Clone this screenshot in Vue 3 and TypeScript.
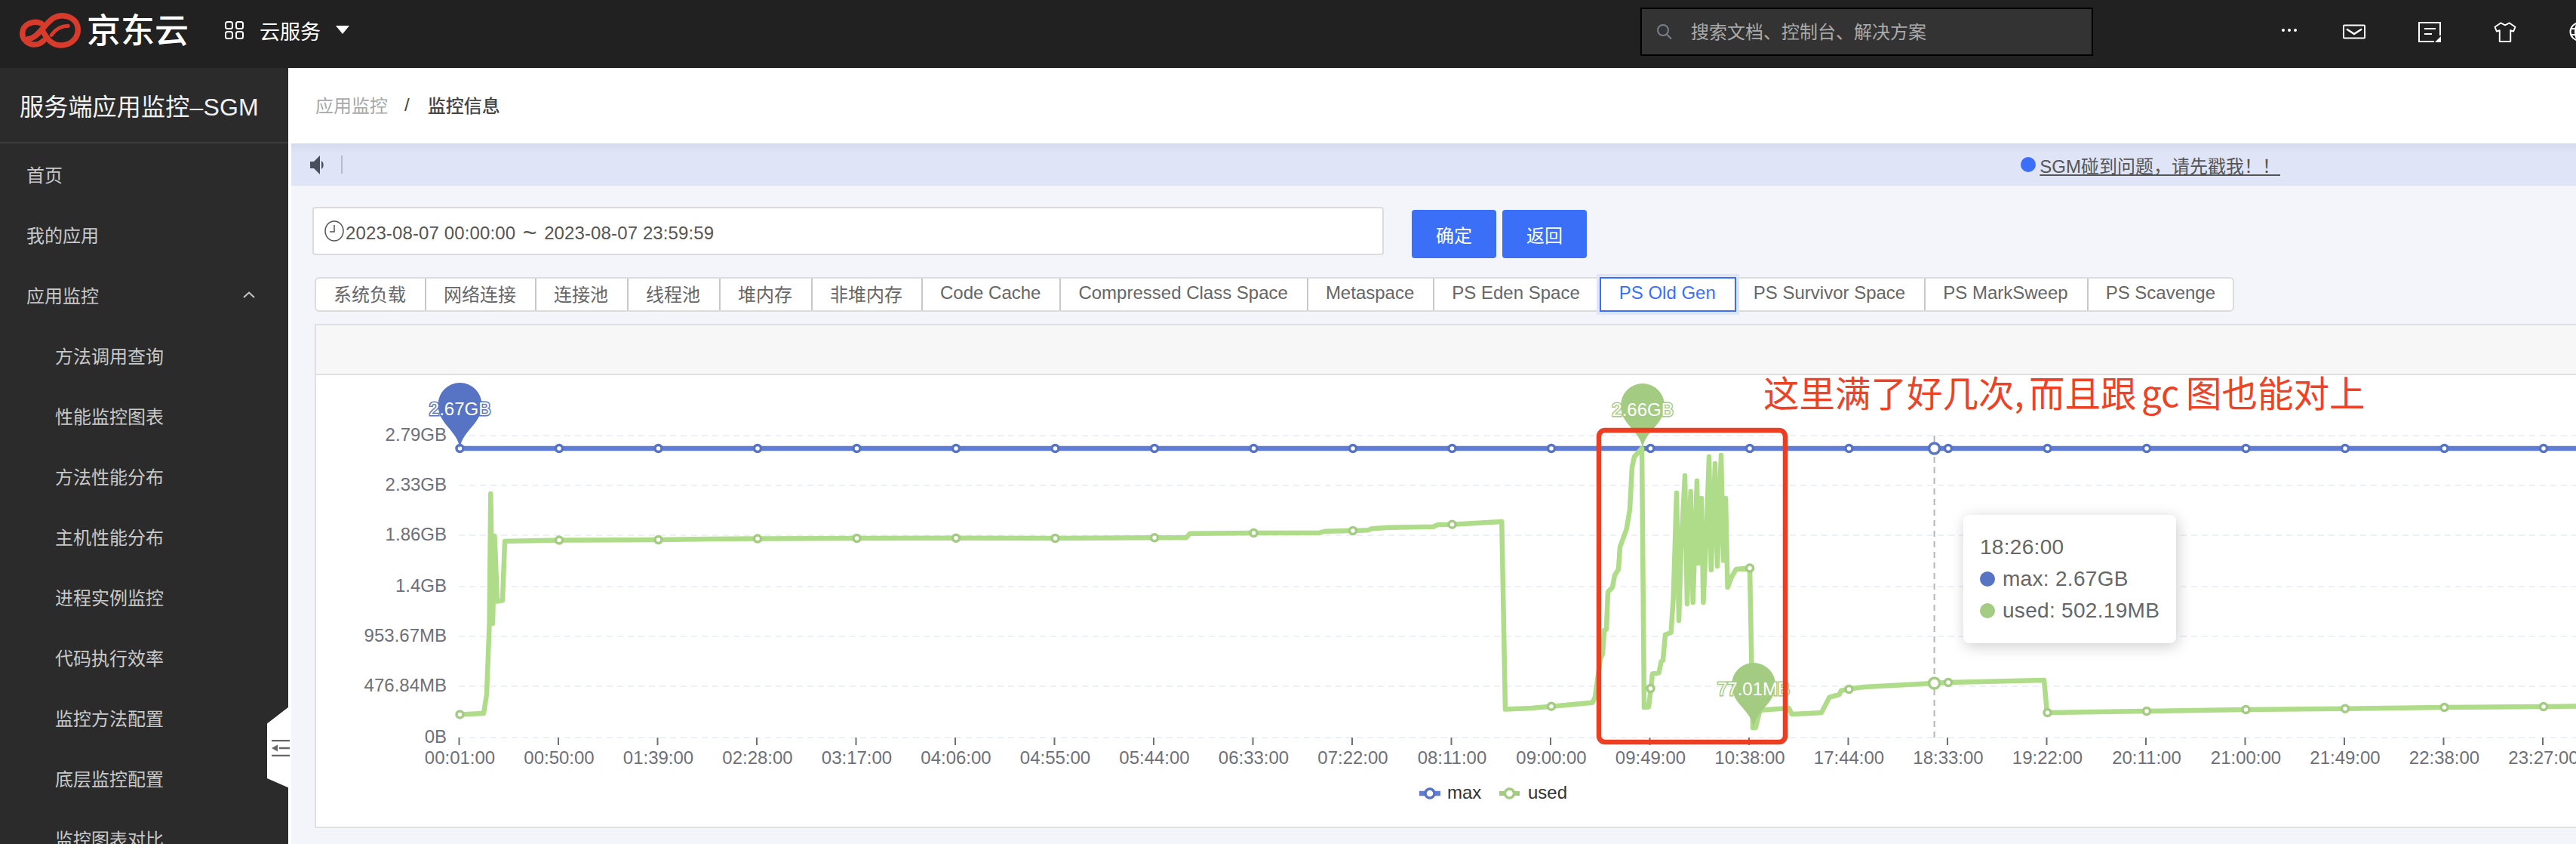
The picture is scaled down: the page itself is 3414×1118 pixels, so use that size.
<script setup lang="ts">
const menu = ['首页', '我的应用']
const subMenu = ['方法调用查询', '性能监控图表', '方法性能分布', '主机性能分布', '进程实例监控', '代码执行效率', '监控方法配置', '底层监控配置', '监控图表对比']
const tabs = ['系统负载', '网络连接', '连接池', '线程池', '堆内存', '非堆内存', 'Code Cache', 'Compressed Class Space', 'Metaspace', 'PS Eden Space', 'PS Old Gen', 'PS Survivor Space', 'PS MarkSweep', 'PS Scavenge']

const grid = [
  { y: 577, label: '2.79GB' },
  { y: 643, label: '2.33GB' },
  { y: 709, label: '1.86GB' },
  { y: 777, label: '1.4GB' },
  { y: 843, label: '953.67MB' },
  { y: 909, label: '476.84MB' },
  { y: 977, label: '0B' },
]
const times = ['00:01:00', '00:50:00', '01:39:00', '02:28:00', '03:17:00', '04:06:00', '04:55:00', '05:44:00', '06:33:00', '07:22:00', '08:11:00', '09:00:00', '09:49:00', '10:38:00', '17:44:00', '18:33:00', '19:22:00', '20:11:00', '21:00:00', '21:49:00', '22:38:00', '23:27:00']
const xOf = (i: number) => 609.5 + i * 131.5
const xs = times.map((_, i) => xOf(i))
const usedY = [946.4, 715.6, 715, 713.6, 713, 712.8, 713, 712.3, 706, 703, 694.7, 935.7, 912, 752.5, 913, 904, 944, 942, 940, 938.7, 937, 936]
const usedPts = xs.map((x, i) => ({ x, y: usedY[i] }))

const usedLine: number[][] = [
  [609.5, 946.4], [641, 945], [645, 919.6], [648.6, 826], [650.3, 654], [653, 826], [655.5, 710], [659, 796.6], [666, 795.4], [669, 717],
  [741.5, 715.6], [872.5, 715], [941, 714], [1004, 713.6], [1136, 713], [1267, 712.8], [1398.5, 713], [1530, 712.3], [1572, 712.3], [1577, 706.7],
  [1661, 706], [1749, 705.7], [1757, 703.7], [1793, 703], [1813, 702.3], [1818, 700.3], [1841, 698.7], [1899.5, 697.7], [1905.6, 695], [1924.5, 694.7],
  [1990.3, 691], [1995, 939.6], [2030, 938], [2056, 935.7], [2110.5, 930.7], [2114, 923], [2121, 873], [2124, 866], [2126, 835], [2129, 833.6],
  [2131, 784], [2137, 778], [2140, 762], [2145, 754], [2147, 724.6], [2155.6, 701], [2160, 675], [2163, 619], [2166, 605], [2176, 594],
  [2179, 937], [2185, 936.4], [2188, 912], [2190, 892.5], [2198.5, 891.4], [2201.6, 876.4], [2204, 874.6], [2207, 840.7], [2214.6, 838], [2217.6, 794],
  [2222, 653], [2225, 822], [2228, 726], [2233, 630], [2236, 800], [2240.6, 651], [2243.7, 798], [2249, 637], [2250.6, 746], [2255, 660],
  [2257.4, 798], [2262, 694], [2265, 605], [2267.8, 755], [2273, 614], [2276, 750], [2281, 603], [2284, 742.5], [2287, 660], [2289.6, 778],
  [2295, 764], [2301, 754], [2319, 752.5], [2323, 964], [2326.7, 964], [2332.5, 940.7], [2370.7, 938], [2374.6, 946], [2397.5, 945], [2414, 944],
  [2424.6, 923.6], [2437.5, 920], [2440, 915], [2450, 912.5], [2471, 910], [2536, 906.5], [2563.6, 905], [2582, 904], [2709, 901], [2713, 944],
  [2845, 942], [2976, 940], [3107.6, 938.7], [3239.6, 937], [3371, 936], [3414, 935.4],
]
const usedPath = usedLine.map((p) => p.join(',')).join(' ')

const pinPath = (cx: number, top: number, tip: number) => {
  const r = 29
  const c = top + r
  return `M${cx},${tip} C${cx - 3},${tip - 24} ${cx - r},${c + 26} ${cx - r},${c} A${r},${r} 0 1 1 ${cx + r},${c} C${cx + r},${c + 26} ${cx + 3},${tip - 24} ${cx},${tip} Z`
}
const pins = [
  { d: pinPath(609.5, 507, 594), x: 609.5, y: 541, text: '2.67GB', fill: '#5773c4', edge: '#5773c4' },
  { d: pinPath(2177, 508, 594), x: 2177, y: 542, text: '2.66GB', fill: '#a3cb81', edge: '#a3cb81' },
  { d: pinPath(2324, 878, 964), x: 2324, y: 912, text: '77.01MB', fill: '#a3cb81', edge: '#a3cb81' },
]
</script>

<template>
  <div class="page">
    <header class="top">
      <svg class="logo" viewBox="0 0 240 142" aria-hidden="true">
        <g fill="none" stroke="#d63b2b" stroke-width="22" stroke-linecap="round">
          <path d="M84 44C50 30 11 50 11 84C11 122 62 144 94 112" />
          <path d="M34 106C70 102 95 50 130 25C170 0 230 20 229 70C229 110 190 135 150 129C120 124 105 100 88 70" />
          <path d="M125 90C140 68 160 55 190 54" stroke-width="15" />
        </g>
      </svg>
      <span class="brand">京东云</span>
      <svg class="apps" viewBox="0 0 25 24" aria-hidden="true">
        <g fill="none" stroke="#fff" stroke-width="2">
          <rect x="1" y="1" width="9" height="9" rx="2.5" />
          <rect x="15" y="1" width="9" height="9" rx="2.5" />
          <rect x="1" y="14" width="9" height="9" rx="2.5" />
          <rect x="15" y="14" width="9" height="9" rx="2.5" />
        </g>
      </svg>
      <span class="service">云服务</span>
      <span class="caret"></span>
      <div class="search">
        <svg class="search-icon" viewBox="0 0 22 20" aria-hidden="true">
          <g fill="none" stroke="#79808c" stroke-width="2">
            <circle cx="9" cy="8" r="7" />
            <path d="M14 13.500L20 19.500" />
          </g>
        </svg>
        <span class="search-text">搜索文档、控制台、解决方案</span>
      </div>
      <div class="actions">
        <svg class="act-dots" viewBox="0 0 20 4" aria-hidden="true">
          <circle cx="2" cy="2" r="2" fill="#fff" />
          <circle cx="10" cy="2" r="2" fill="#fff" />
          <circle cx="18" cy="2" r="2" fill="#fff" />
        </svg>
        <svg class="act-icon" viewBox="0 0 30 20" aria-hidden="true">
          <rect x="1" y="1" width="28" height="17" rx="1" fill="none" stroke="#fff" stroke-width="2" />
          <path d="M5 6L15 12.500L25 6" fill="none" stroke="#fff" stroke-width="2.500" />
        </svg>
        <svg class="act-icon" viewBox="0 0 30 27" aria-hidden="true">
          <path d="M21 26H1V1H29V18" fill="none" stroke="#fff" stroke-width="2" />
          <path d="M8 9H23M8 16H18" fill="none" stroke="#fff" stroke-width="2" />
          <path d="M30 19V27H22Z" fill="#fff" />
        </svg>
        <svg class="act-icon" viewBox="0 0 30 28" aria-hidden="true">
          <path d="M9 1.500L15 4.500L21 1.500L29 7L26.500 13L22.500 11.500V27H7.500V11.500L3.500 13L1 7Z" fill="none" stroke="#fff" stroke-width="2" stroke-linejoin="round" />
        </svg>
        <svg class="act-globe" viewBox="0 0 26 26" aria-hidden="true">
          <g fill="none" stroke="#fff" stroke-width="2">
            <circle cx="13" cy="13" r="11.500" />
            <ellipse cx="13" cy="13" rx="5" ry="11.500" />
            <path d="M2 9H24M2 17H24" />
          </g>
        </svg>
      </div>
    </header>

    <div class="body">
      <aside class="side">
        <div class="side-title">服务端应用监控–SGM</div>
        <nav class="menu">
          <div v-for="m in menu" :key="m" class="menu-item">{{ m }}</div>
          <div class="menu-item menu-open">
            <span>应用监控</span>
            <svg class="chev" viewBox="0 0 16 9" aria-hidden="true">
              <path d="M1 8L8 1.500L15 8" fill="none" stroke="#c9c9c9" stroke-width="2" />
            </svg>
          </div>
          <div v-for="s in subMenu" :key="s" class="menu-item sub">{{ s }}</div>
        </nav>
      </aside>

      <div class="toggle">
        <svg viewBox="0 0 24 22" aria-hidden="true">
          <path d="M0 1H24M10 11H24M0 21H24" stroke="#666" stroke-width="2.500" fill="none" />
          <path d="M8 6.500V15.500L0 11Z" fill="#666" />
        </svg>
      </div>

      <main class="main">
        <div class="crumb">
          <span class="crumb-a">应用监控</span>
          <span class="crumb-s">/</span>
          <span class="crumb-b">监控信息</span>
        </div>
        <div class="notice">
          <svg class="speaker" viewBox="0 0 20 25" aria-hidden="true">
            <path d="M0 8H5L13 0V25L5 17H0Z" fill="#4a4f5c" />
            <path d="M15 7C18.500 9 18.500 16 15 18Z" fill="#4a4f5c" />
          </svg>
          <i class="notice-bar"></i>
          <div class="notice-link">
            <i class="notice-dot"></i>
            <span>SGM碰到问题，请先戳我！！</span>
          </div>
        </div>

        <div class="content">
          <div class="date-row">
            <div class="date">
              <svg class="clock" viewBox="0 0 26 28" aria-hidden="true">
                <ellipse cx="13" cy="14" rx="12" ry="13" fill="none" stroke="#555" stroke-width="1.500" />
                <path d="M13 6V15H7" fill="none" stroke="#555" stroke-width="1.500" />
              </svg>
              <span class="date-text">2023-08-07 00:00:00<span class="tilde">~</span>2023-08-07 23:59:59</span>
            </div>
            <button class="btn first" type="button">确定</button>
            <button class="btn" type="button">返回</button>
          </div>

          <div class="tabs">
            <div v-for="t in tabs" :key="t" class="tab" :class="{ active: t === 'PS Old Gen' }">{{ t }}</div>
          </div>

          <section class="panel">
            <div class="panel-head"></div>
            <div class="chart">
              <svg class="chart-svg" viewBox="419 497 2995 598">
                <g>
                  <line v-for="g in grid" :key="g.y" class="grid" x1="608" x2="3414" :y1="g.y" :y2="g.y" />
                  <text v-for="g in grid" :key="g.label" class="axis" x="592" :y="g.y + 7" text-anchor="end">{{ g.label }}</text>
                </g>
                <g>
                  <line v-for="x in xs" :key="x" class="tick" :x1="x - 1" :x2="x - 1" y1="977" y2="987" />
                  <text v-for="(t, i) in times" :key="t" class="axis" :x="xs[i]" y="1012" text-anchor="middle">{{ t }}</text>
                </g>

                <line class="cross" x1="2563.600" x2="2563.600" y1="577" y2="977" />

                <line class="line-max" x1="609.500" x2="3414" y1="594" y2="594" />
                <polyline class="line-used" :points="usedPath" />

                <circle v-for="x in xs" :key="x" class="pt-max" :cx="x" cy="594" r="4.500" />
                <circle v-for="p in usedPts" :key="p.x" class="pt-used" :cx="p.x" :cy="p.y" r="4.500" />
                <circle class="pt-max" cx="2563.600" cy="594" r="7" />
                <circle class="pt-used" cx="2563.600" cy="905" r="7" />

                <g v-for="p in pins" :key="p.text">
                  <path :d="p.d" :fill="p.fill" />
                  <text class="pin-text" :x="p.x" :y="p.y + 9" text-anchor="middle" :stroke="p.edge">{{ p.text }}</text>
                </g>

                <rect class="redbox" x="2119" y="570" width="247" height="413" rx="8" />
                <text class="note" y="539">
                  <tspan x="2337">这里满了好几次,</tspan>
                  <tspan x="2689">而且跟</tspan>
                  <tspan x="2838">gc</tspan>
                  <tspan x="2897">图也能对上</tspan>
                </text>

                <line class="leg-max" x1="1881" x2="1909" y1="1051" y2="1051" />
                <circle class="pt-max" cx="1895" cy="1051" r="6" />
                <text class="legend" x="1918" y="1058">max</text>
                <line class="leg-used" x1="1987" x2="2014" y1="1051" y2="1051" />
                <circle class="pt-used" cx="2000.500" cy="1051" r="6" />
                <text class="legend" x="2025" y="1058">used</text>
              </svg>

              <div class="tip">
                <div class="tip-row">18:26:00</div>
                <div class="tip-row"><i class="tip-dot blue"></i>max: 2.67GB</div>
                <div class="tip-row"><i class="tip-dot green"></i>used: 502.19MB</div>
              </div>
            </div>
          </section>
        </div>
      </main>
    </div>
  </div>
</template>

<style>
html,
body {
  margin: 0;
  padding: 0;
  overflow: hidden;
  background: #f3f5fa;
}
</style>

<style scoped>
* {
  box-sizing: border-box;
}

.page {
  width: 3414px;
  height: 1118px;
  overflow: hidden;
  display: flex;
  flex-direction: column;
  font-family: "Liberation Sans", "Noto Sans CJK SC", sans-serif;
  font-size: 24px;
  color: #666;
}

.top {
  height: 90px;
  flex: none;
  display: flex;
  align-items: center;
  padding-left: 26px;
  background: #212121;
  color: #fff;
  overflow: hidden;
}

.logo {
  width: 81px;
  height: 48px;
  flex: none;
  margin-top: -10px;
}

.brand {
  margin-left: 8px;
  font-size: 45px;
  line-height: 50px;
  font-weight: 500;
  margin-top: -6px;
  width: 136px;
  flex: none;
  white-space: nowrap;
}

.apps {
  width: 25px;
  height: 24px;
  flex: none;
  margin-left: 47px;
  margin-top: -10px;
}

.service {
  margin-left: 21px;
  font-size: 27px;
  width: 81px;
  flex: none;
  white-space: nowrap;
  margin-top: -10px;
}

.caret {
  margin-left: 20px;
  margin-top: -12px;
  flex: none;
  width: 0;
  height: 0;
  border-left: 9.500px solid transparent;
  border-right: 9.500px solid transparent;
  border-top: 11px solid #fff;
}

.search {
  margin-left: 1711px;
  flex: none;
  width: 600px;
  height: 64px;
  margin-top: -6px;
  border: 2px solid #000;
  background: #333;
  display: flex;
  align-items: center;
  padding-left: 19px;
  color: #aaa;
}

.search-icon {
  width: 22px;
  height: 20px;
  flex: none;
  margin-right: 24px;
}

.search-text {
  margin-top: -3px;
}

.actions {
  margin-left: 250px;
  flex: none;
  display: flex;
  align-items: center;
  margin-top: -6px;
}

.act-dots {
  width: 20px;
  height: 4px;
  flex: none;
  margin-right: 61px;
  margin-top: -4px;
}

.act-icon {
  width: 30px;
  height: 27px;
  flex: none;
  margin-right: 70px;
}

.act-globe {
  width: 26px;
  height: 26px;
  flex: none;
}

.body {
  flex: 1;
  display: flex;
  position: relative;
  min-height: 0;
}

.side {
  width: 382px;
  flex: none;
  background: #2b2b2b;
  color: #c9c9c9;
  overflow: hidden;
}

.side-title {
  height: 100px;
  border-bottom: 2px solid #3c3c3c;
  padding-left: 26px;
  display: flex;
  align-items: center;
  font-size: 32px;
  color: #f2f2f2;
  white-space: nowrap;
  letter-spacing: 0.2px;
}

.menu-item {
  height: 80px;
  padding-left: 35px;
  display: flex;
  align-items: center;
}

.menu-open {
  justify-content: space-between;
  padding-right: 44px;
}

.chev {
  width: 16px;
  height: 9px;
}

.sub {
  padding-left: 73px;
}

.toggle {
  position: absolute;
  left: 354px;
  top: 847px;
  width: 32px;
  height: 108px;
  background: #fff;
  clip-path: polygon(100% 0, 100% 100%, 0 87%, 0 20%, 87% 0);
  display: flex;
  align-items: center;
  padding-left: 6px;
}

.toggle svg {
  width: 24px;
  height: 22px;
  display: block;
}

.main {
  width: 3032px;
  flex: none;
  border-left: 4px solid #fff;
  background: #f3f5fa;
  min-width: 0;
}

.crumb {
  height: 100px;
  padding: 0 0 3px 32px;
  background: #fff;
  display: flex;
  align-items: center;
}

.crumb-a {
  color: #a8a8a8;
}

.crumb-s {
  margin: 0 24px 0 22px;
  color: #444;
}

.crumb-b {
  color: #444;
  font-weight: 500;
}

.notice {
  height: 56px;
  background: linear-gradient(to bottom, #d6dbec 0, #dfe4f7 14px);
  display: flex;
  align-items: center;
  padding-left: 25px;
}

.speaker {
  width: 20px;
  height: 25px;
  flex: none;
}

.notice-bar {
  width: 2px;
  height: 24px;
  margin-left: 21px;
  background: #b6bacb;
  flex: none;
}

.notice-link {
  margin-left: auto;
  margin-right: 392px;
  display: flex;
  align-items: center;
  color: #555;
  text-decoration: underline;
  white-space: nowrap;
}

.notice-dot {
  width: 20px;
  height: 20px;
  border-radius: 50%;
  background: #3b6ff8;
  margin-right: 5px;
  flex: none;
}

.content {
  padding: 28px 0 0 28px;
}

.date-row {
  display: flex;
  align-items: flex-start;
}

.date {
  width: 1420px;
  height: 64px;
  background: #fff;
  border: 2px solid #dcdcdc;
  border-radius: 4px;
  display: flex;
  align-items: center;
  padding-left: 14px;
  color: #555;
  white-space: nowrap;
}

.date-text {
  letter-spacing: 0.12px;
  padding-top: 3px;
}

.tilde {
  display: inline-block;
  font-size: 32px;
  line-height: 1;
  width: 20px;
  margin: 0 9px;
  text-align: center;
  vertical-align: -2px;
}

.clock {
  width: 26px;
  height: 28px;
  flex: none;
  margin-right: 2px;
}

.btn {
  width: 112px;
  height: 64px;
  margin: 4px 0 0 8px;
  border: 0;
  border-radius: 4px;
  background: #3b6ff8;
  color: #fff;
  font: inherit;
  padding: 0;
}

.first {
  margin-left: 37px;
}

.tabs {
  margin: 25px 0 0 3px;
  height: 46px;
  display: inline-flex;
  background: #fff;
  border: 2px solid #dcdcdc;
  border-radius: 6px;
}

.tab {
  padding: 0 25px 4px 24px;
  display: flex;
  align-items: center;
  border-right: 2px solid #c8c8c8;
  white-space: nowrap;
  color: #666;
  margin-left: -1px;
}

.tab:last-child {
  border-right: 0;
  padding-right: 23px;
}

.tab.active {
  position: relative;
  z-index: 1;
  margin: -2px 0 -2px -1px;
  border: 2px solid #3b6ff8;
  color: #3b6ff8;
  box-shadow: 0 0 0 4px #e0e6f8;
  background: #fff;
}

.panel {
  margin: 16px 0 0 3px;
  width: 2997px;
  height: 668px;
  border: 2px solid #e0e0e0;
  border-right: 0;
  background: #fff;
}

.panel-head {
  height: 66px;
  background: #f7f7f7;
  border-bottom: 2px solid #e0e0e0;
}

.chart {
  position: relative;
  width: 2995px;
  height: 598px;
}

.chart-svg {
  display: block;
  width: 2995px;
  height: 598px;
  overflow: hidden;
}

.grid {
  stroke: #eef0f7;
  stroke-width: 2;
  stroke-dasharray: 8 6;
}

.axis {
  font-size: 24px;
  fill: #6e7079;
}

.tick {
  stroke: #6e7079;
  stroke-width: 2;
}

.cross {
  stroke: #b5b5b5;
  stroke-width: 2;
  stroke-dasharray: 8 6;
}

.line-max,
.leg-max {
  stroke: #5f7dd6;
  stroke-width: 6.500;
}

.line-used {
  fill: none;
  stroke: #aedc88;
  stroke-width: 6.500;
  stroke-linejoin: round;
}

.leg-used {
  stroke: #a3cb81;
  stroke-width: 6;
}

.pt-max {
  fill: #fff;
  stroke: #5773c4;
  stroke-width: 3.500;
}

.pt-used {
  fill: #fff;
  stroke: #a3cb81;
  stroke-width: 3.500;
}

.pin-text {
  font-size: 24px;
  fill: #fff;
  stroke-width: 3;
  paint-order: stroke;
}

.redbox {
  fill: none;
  stroke: #ee3e22;
  stroke-width: 6.500;
}

.note {
  font-family: "Noto Sans CJK SC", "Liberation Sans", sans-serif;
  font-size: 47.500px;
  fill: #ee4226;
}

.legend {
  font-size: 24px;
  fill: #333;
}

.tip {
  position: absolute;
  left: 2183px;
  top: 185px;
  width: 282px;
  height: 170px;
  padding: 22px 22px;
  background: #fff;
  border-radius: 8px;
  box-shadow: 2px 4px 20px rgba(0, 0, 0, 0.2);
  font-size: 28px;
  letter-spacing: 0.3px;
  color: #666;
  white-space: nowrap;
}

.tip-row {
  height: 42px;
  display: flex;
  align-items: center;
}

.tip-dot {
  width: 20px;
  height: 20px;
  border-radius: 50%;
  margin-right: 10px;
  flex: none;
}

.blue {
  background: #5773c4;
}

.green {
  background: #a3cb81;
}
</style>
